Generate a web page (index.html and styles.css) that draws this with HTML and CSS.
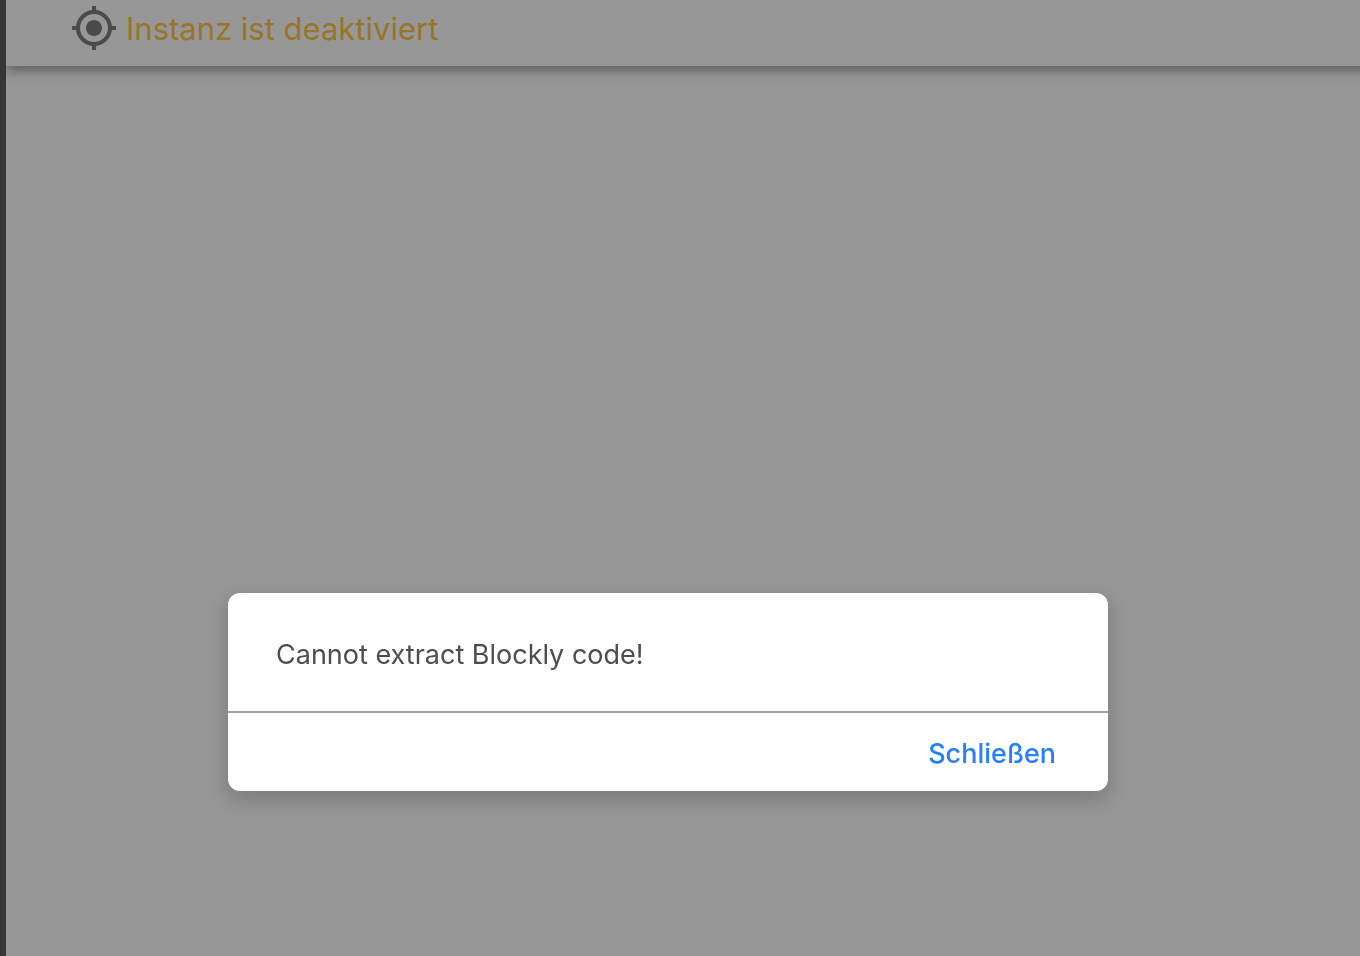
FILE: index.html
```html
<!DOCTYPE html>
<html lang="de">
<head>
  <meta charset="UTF-8">
  <meta name="viewport" content="width=device-width, initial-scale=1.0">
  <title>Skripte</title>
  <link rel="stylesheet" href="styles.css">
</head>
<body>
  <div class="sidebar-edge"></div>
  <main class="editor">
    <header class="toolbar">
      <svg class="locate-icon" viewBox="0 0 24 24" aria-hidden="true">
        <path d="M12 8c-2.210 0-4 1.790-4 4s1.790 4 4 4 4-1.790 4-4-1.790-4-4-4zm8.940 3A8.994 8.994 0 0 0 13 3.060V1h-2v2.060A8.994 8.994 0 0 0 3.060 11H1v2h2.060A8.994 8.994 0 0 0 11 20.940V23h2v-2.060A8.994 8.994 0 0 0 20.940 13H23v-2h-2.060zM12 19c-3.870 0-7-3.130-7-7s3.130-7 7-7 7 3.130 7 7-3.130 7-7 7z"/>
      </svg>
      <span class="status">Instanz ist deaktiviert</span>
    </header>
    <div class="workspace"></div>
  </main>

  <div class="overlay">
    <div class="dialog" role="alertdialog" aria-modal="true" aria-describedby="message">
      <p class="dialog-text" id="message">Cannot extract Blockly code!</p>
      <div class="dialog-actions">
        <button class="close-button" type="button">Schließen</button>
      </div>
    </div>
  </div>
</body>
</html>
```

FILE: styles.css
```css
body {
  display: flex;
  min-height: 100vh;
  margin: 0;
  font-family: Inter, sans-serif;
  background: #969696;
}
.sidebar-edge {
  width: 6px;
  background: #363636;
}
.editor {
  display: flex;
  flex: 1;
  flex-direction: column;
  overflow: hidden;
}
/* runs past the right edge so the shadow does not fade there */
.toolbar {
  display: flex;
  align-items: flex-start;
  gap: 8px;
  margin-right: -24px;
  padding: 4px 64px 12px;
  background: #979797;
  box-shadow: 0 4px 12px rgba(0, 0, 0, 0.4);
}
.locate-icon {
  width: 48px;
  height: 48px;
  fill: #4b4b4b;
}
.status {
  font-size: 31px;
  line-height: 50px;
  color: #987427;
}
.workspace {
  flex: 1;
}
.overlay {
  position: fixed;
  inset: 0;
  display: flex;
  align-items: flex-end;
  justify-content: center;
  padding: 0 24px 165px 0;
}
.dialog {
  width: 880px;
  max-width: 90%;
  border-radius: 12px;
  background: #fff;
  box-shadow: 0 8px 20px rgba(0, 0, 0, 0.2);
}
.dialog-text {
  margin: 0;
  padding: 44px 48px 38px;
  font-size: 27px;
  line-height: 36px;
  color: #4d4d4d;
}
.dialog-actions {
  display: flex;
  justify-content: flex-end;
  padding: 18px 40px 14px;
  border-top: 2px solid #a0a0a0;
}
.close-button {
  padding: 4px 12px;
  border: none;
  background: none;
  font-family: inherit;
  font-size: 27px;
  font-weight: 500;
  line-height: 38px;
  color: #267fff;
  cursor: pointer;
}
```
